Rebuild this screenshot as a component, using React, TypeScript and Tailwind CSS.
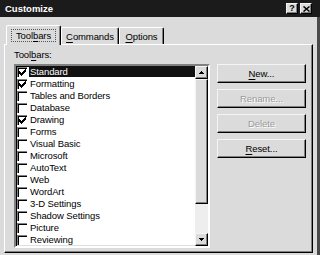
import React from "react";

const items = [
  { name: "Standard", checked: true },
  { name: "Formatting", checked: true },
  { name: "Tables and Borders", checked: false },
  { name: "Database", checked: false },
  { name: "Drawing", checked: true },
  { name: "Forms", checked: false },
  { name: "Visual Basic", checked: false },
  { name: "Microsoft", checked: false },
  { name: "AutoText", checked: false },
  { name: "Web", checked: false },
  { name: "WordArt", checked: false },
  { name: "3-D Settings", checked: false },
  { name: "Shadow Settings", checked: false },
  { name: "Picture", checked: false },
  { name: "Reviewing", checked: false },
];

const checkPixels: [number, number][] = [
  [6, 0],
  [5, 1], [6, 1],
  [0, 2], [4, 2], [5, 2], [6, 2],
  [0, 3], [1, 3], [3, 3], [4, 3], [5, 3],
  [0, 4], [1, 4], [2, 4], [3, 4], [4, 4],
  [1, 5], [2, 5], [3, 5],
  [2, 6],
];

function CheckMark() {
  return (
    <svg width="7" height="7" viewBox="0 0 7 7" shapeRendering="crispEdges">
      {checkPixels.map(([x, y]) => (
        <rect key={`${x}-${y}`} x={x} y={y} width="1" height="1" fill="#000" />
      ))}
    </svg>
  );
}

function CheckBox({ checked }: { checked: boolean }) {
  return (
    <div className="w-[10px] h-[10px] shrink-0 border-t border-l border-[#808080] shadow-[inset_1px_1px_0_#000] pl-[1px] pt-[1px] flex items-start">
      {checked && <CheckMark />}
    </div>
  );
}

function Arrow({ up }: { up: boolean }) {
  return (
    <svg width="5" height="3" viewBox="0 0 5 3" shapeRendering="crispEdges">
      {up ? (
        <>
          <rect x="2" y="0" width="1" height="1" fill="#000" />
          <rect x="1" y="1" width="3" height="1" fill="#000" />
          <rect x="0" y="2" width="5" height="1" fill="#000" />
        </>
      ) : (
        <>
          <rect x="0" y="0" width="5" height="1" fill="#000" />
          <rect x="1" y="1" width="3" height="1" fill="#000" />
          <rect x="2" y="2" width="1" height="1" fill="#000" />
        </>
      )}
    </svg>
  );
}

const raised =
  "bg-[#dbdbdb] border border-t-[#f4f4f4] border-l-[#f4f4f4] border-b-black border-r-black shadow-[inset_-1px_-1px_0_#808080]";

const ul = "underline underline-offset-[1.5px] decoration-1";

function TitleBtn({ children }: { children: React.ReactNode }) {
  return (
    <div className={`w-[12px] h-[11px] ${raised} flex items-center justify-center`}>
      {children}
    </div>
  );
}

function ActionBtn({
  children,
  disabled,
}: {
  children: React.ReactNode;
  disabled?: boolean;
}) {
  return (
    <div
      className={`h-[19px] ${raised} flex items-center justify-center leading-[11px] ${
        disabled ? "text-[#9a9a9a] [text-shadow:1px_1px_0_#ffffff]" : "text-black"
      }`}
    >
      {children}
    </div>
  );
}

export default function App() {
  return (
    <div className="w-[320px] h-[255px] bg-[#dbdbdb] flex flex-col overflow-hidden font-['Liberation_Sans',Arial,sans-serif] text-[9.5px] tracking-[-0.1px] text-black">
      {/* Title bar */}
      <div className="h-[17px] shrink-0 bg-[#1b1b1b] flex items-center justify-between pl-[5px] pr-[8px]">
        <span className="font-bold text-[9.5px] tracking-normal leading-none text-white">
          Customize
        </span>
        <div className="flex gap-[2px]">
          <TitleBtn>
            <span className="font-bold text-[9px] leading-none">?</span>
          </TitleBtn>
          <TitleBtn>
            <svg width="7" height="6" viewBox="0 0 7 6">
              <path d="M0.5 0.5 L6.5 5.5 M6.5 0.5 L0.5 5.5" stroke="#000" strokeWidth="1.5" fill="none" />
            </svg>
          </TitleBtn>
        </div>
      </div>

      {/* Body */}
      <div className="flex flex-1 min-h-0">
        <div className="flex flex-col pl-[4px] pt-[8px]">
          {/* Tabs */}
          <div className="relative z-10 ml-[2px] h-[19px] flex items-end">
            <div className="w-[55px] h-[20px] -mb-px bg-[#dbdbdb] rounded-t-[2px] border-t border-l border-white border-r border-r-black shadow-[inset_-1px_0_0_#808080] flex justify-center pt-[3px]">
              <span className="h-[13px] px-[4px] border border-dotted border-[#555] leading-[11px]">
                Tool<span className={ul}>b</span>ars
              </span>
            </div>
            <div className="w-[58px] h-[17px] rounded-t-[2px] border-t border-l border-white border-r border-r-black shadow-[inset_-1px_0_0_#808080] flex items-center justify-center leading-[11px]">
              <span>
                <span className={ul}>C</span>ommands
              </span>
            </div>
            <div className="w-[45px] h-[17px] rounded-t-[2px] border-t border-l border-white border-r border-r-black shadow-[inset_-1px_0_0_#808080] flex items-center justify-center leading-[11px]">
              <span>
                <span className={ul}>O</span>ptions
              </span>
            </div>
          </div>

          {/* Panel */}
          <div className="w-[309px] h-[209px] border-t border-l border-white border-r border-b border-r-black border-b-black shadow-[inset_-1px_-1px_0_#808080] pl-[9px] pt-[4px] flex flex-col">
            <div className="leading-[11px] h-[11px]">
              Tool<span className={ul}>b</span>ars:
            </div>
            <div className="mt-[4px] flex">
              {/* List box */}
              <div className="w-[196px] h-[184px] bg-white border-2 border-t-[#808080] border-l-[#808080] border-b-white border-r-white shadow-[inset_1px_1px_0_#000,inset_-1px_-1px_0_#dfdfdf] flex">
                <div className="flex-1 flex flex-col">
                  {items.map((it, i) => (
                    <div key={it.name} className="h-[12px] flex items-start">
                      <div className="ml-[1px] mt-[1px]">
                        <CheckBox checked={it.checked} />
                      </div>
                      <div
                        className={`ml-[2px] flex-1 h-[11px] pl-[1px] leading-[11px] whitespace-nowrap ${
                          i === 0 ? "bg-[#111] text-white" : ""
                        }`}
                      >
                        {it.name}
                      </div>
                    </div>
                  ))}
                </div>
                {/* Scrollbar */}
                <div className="w-[13px] flex flex-col">
                  <div className={`h-[13px] ${raised} flex items-center justify-center`}>
                    <Arrow up />
                  </div>
                  <div className={`h-[125px] ${raised}`} />
                  <div className="flex-1 bg-[#eeeeee]" />
                  <div className={`h-[13px] ${raised} flex items-center justify-center`}>
                    <Arrow up={false} />
                  </div>
                </div>
              </div>

              {/* Buttons */}
              <div className="ml-[7px] w-[89px] flex flex-col gap-[6px]">
                <ActionBtn>
                  <span>
                    <span className={ul}>N</span>ew...
                  </span>
                </ActionBtn>
                <ActionBtn disabled>
                  <span>Rename...</span>
                </ActionBtn>
                <ActionBtn disabled>
                  <span>Delete</span>
                </ActionBtn>
                <ActionBtn>
                  <span>
                    <span className={ul}>R</span>eset...
                  </span>
                </ActionBtn>
              </div>
            </div>
          </div>
        </div>
        {/* right window frame */}
        <div className="flex-1 border-r-[3px] border-r-[#4a4a4a]" />
      </div>
    </div>
  );
}
